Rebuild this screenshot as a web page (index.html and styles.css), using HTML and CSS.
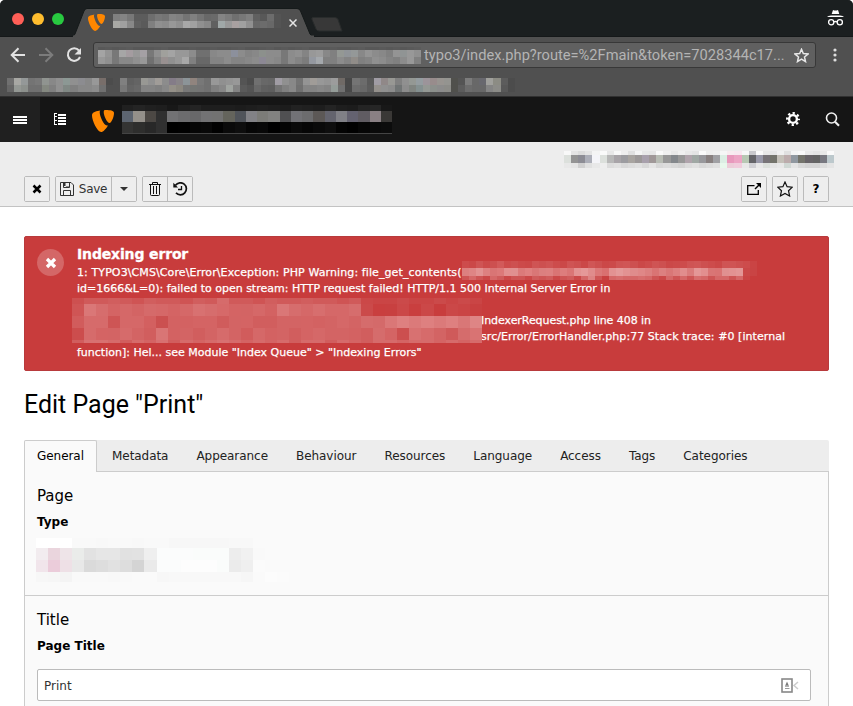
FILE: index.html
```html
<!DOCTYPE html>
<html lang="en">
<head>
<meta charset="utf-8">
<title>Edit Page "Print"</title>
<link rel="stylesheet" href="styles.css">
</head>
<body>
<svg class="defs" width="0" height="0"><defs>
<symbol id="typo3" viewBox="0 0 22 22"><path fill="#ff8700" d="M16 15.2c-.4.1-.7.2-1.1.2-3.2 0-7.2-9.8-7.2-13 0-1.200.3-1.600.7-1.900C4.700 1 .800 2.200.200 4.200 0 4.600 0 5 0 5.500 0 10.500 5.300 22 9.200 22c1.800 0 4.900-3 6.800-6.800M14.100.100c3.900 0 7.900.600 7.900 2.900 0 4.600-2.900 10.100-4.400 10.100-2.700 0-5.900-7.400-5.900-11 0-1.700.6-2 2.400-2"/></symbol>
</defs></svg>
<div class="window">
  <div class="tabstrip">
    <div class="lights"><i class="red"></i><i class="yellow"></i><i class="green"></i></div>
    <div class="browser-tab">
      <svg class="tab-shape" width="244" height="29" viewBox="0 0 244 29"><path d="M0 28.500Q2 28 3 26L12 3Q13 .5 15 .5H225Q227.500.5 228.500 3L238 26Q239 28.500 243 28.500" fill="#505050" stroke="#151a1a"/><path d="M1 28.500H242" stroke="#505050" stroke-width="2"/></svg>
      <svg class="tab-logo" width="17" height="17"><use href="#typo3"/></svg>
      <span class="mosaic" data-name="tab"></span>
      <svg class="tab-close" width="8" height="8" viewBox="0 0 8 8"><path d="M.5.5l7 7M7.500.5l-7 7" stroke="#e4e4e4" stroke-width="1.500"/></svg>
    </div>
    <svg class="newtab" width="32" height="15" viewBox="0 0 32 15"><path d="M2 .5H24Q26 .5 27 2.500L31 14H8Q6 14 5 12L.8 2Q.5.5 2 .5Z" fill="#383838" stroke="#292c2c"/></svg>
    <svg class="incognito" width="17" height="18" viewBox="0 0 17 18"><path d="M6 1Q8.500 2 11 1L12.300 5H4.700ZM0 8Q1 6.700 4 6.500H13Q16 6.700 17 8Z" fill="#fff"/><g fill="none" stroke="#fff" stroke-width="1.300"><circle cx="4.200" cy="13.300" r="2.600"/><circle cx="12.800" cy="13.300" r="2.600"/><path d="M6.800 13Q8.500 12 10.200 13"/></g></svg>
  </div>
  <div class="toolbar">
    <svg class="nav" width="16" height="16" viewBox="0 0 16 16" fill="none" stroke="#e2e2e2" stroke-width="2"><path d="M15 8H2M8.500 1.200L1.700 8l6.800 6.800"/></svg>
    <svg class="nav" width="16" height="16" viewBox="0 0 16 16" fill="none" stroke="#7c7c7c" stroke-width="2"><path d="M1 8H14M7.500 1.200L14.300 8l-6.800 6.800"/></svg>
    <svg class="nav" width="16" height="16" viewBox="0 0 16 16"><path d="M13 3.500A6.300 6.300 0 1 0 14 10" fill="none" stroke="#e2e2e2" stroke-width="2"/><path d="M15 1V7.500H8.500Z" fill="#e2e2e2"/></svg>
    <div class="address">
      <span class="mosaic" data-name="url"></span>
      <span class="url">typo3/index.php?route=%2Fmain&amp;token=7028344c17...</span>
      <svg class="bookmark-star" width="15" height="15" viewBox="0 0 15 15"><path d="M7.500 1.300L9.300 5.500 14 6 10.500 9 11.500 13.600 7.500 11.200 3.500 13.600 4.500 9 1 6 5.700 5.500Z" fill="none" stroke="#e8e8e8" stroke-width="1.500"/></svg>
    </div>
    <svg class="kebab" width="4" height="14" viewBox="0 0 4 14" fill="#dedede"><circle cx="2" cy="2" r="1.600"/><circle cx="2" cy="7" r="1.600"/><circle cx="2" cy="12" r="1.600"/></svg>
  </div>
  <div class="bookmarks"><span class="mosaic" data-name="bookmarks"></span></div>
</div>

<header class="topbar">
  <span class="menu-toggle"><svg width="14" height="8" viewBox="0 0 14 8"><path d="M0 1H14M0 4H14M0 7H14" stroke="#fff" stroke-width="2"/></svg></span>
  <svg class="tree" width="12" height="12" viewBox="0 0 12 12" fill="none" stroke="#fff"><path d="M.5 0V12M0 .5H3M0 3.500H3M0 7.500H3M0 11.500H3" stroke-width="1"/><path d="M4 2H12M4 5H12M4 8H12M4 11H12" stroke-width="2"/></svg>
  <svg class="logo" width="22" height="22"><use href="#typo3"/></svg>
  <span class="mosaic site" data-name="site"></span>
  <svg class="gear" width="14" height="14" viewBox="0 0 14 14" fill="none" stroke="#fff"><circle cx="7" cy="7" r="3.900" stroke-width="2.400"/><circle cx="7" cy="7" r="5.900" stroke-width="2.200" stroke-dasharray="2.317 2.317" stroke-dashoffset="1.160"/></svg>
  <svg class="search" width="15" height="15" viewBox="0 0 15 15" fill="none" stroke="#f0f0f0"><circle cx="6.500" cy="6" r="5" stroke-width="1.600"/><path d="M10 9.800L14 13.700" stroke-width="2.200"/></svg>
</header>

<div class="docheader">
  <div class="path"><span class="mosaic" data-name="path"></span></div>
  <div class="buttons">
    <span class="group"><button class="btn"><svg width="10" height="10" viewBox="0 0 10 10"><path d="M1.500 1.500l7 7M8.500 1.500l-7 7" stroke="#000" stroke-width="2.500"/></svg></button></span>
    <span class="group">
      <button class="btn save"><svg width="14" height="14" viewBox="0 0 14 14" fill="none" stroke="#333"><path d="M.5.5H11L13.500 3V13.500H.5ZM3.500.5V5.500H9.500V.5M3.500 13.500V8.500H10.500V13.500"/><path d="M4.500 1V4" stroke-width="2"/><path d="M6 5H9"/></svg>Save</button>
      <button class="btn caret"><svg width="8" height="4" viewBox="0 0 8 4"><path d="M0 0H8L4 4Z" fill="#333"/></svg></button>
    </span>
    <span class="group">
      <button class="btn trash"><svg width="12" height="14" viewBox="0 0 12 14" fill="none" stroke="#111"><path d="M0 2.500H12M3.500 2.500V.5H8.500V2.500M1.500 3V12.500Q1.500 13.500 2.500 13.500H9.500Q10.500 13.500 10.500 12.500V3M4.500 4V12M7.500 4V12"/></svg></button>
      <button class="btn history"><svg width="15" height="14" viewBox="0 0 15 14" fill="none" stroke="#111"><path d="M2.500 3.300A6 6 0 1 1 3 10.900" stroke-width="1.700"/><path d="M8.500 4V7.500H5" stroke-width="1.300"/><path d="M.3.800V5.500H5Z" fill="#111" stroke="none"/></svg></button>
    </span>
    <span class="spacer"></span>
    <span class="group"><button class="btn"><svg width="14" height="12" viewBox="0 0 14 12"><path d="M7.500 2.600H.7V11.300H11.300V7" fill="none" stroke="#000" stroke-width="1.300"/><path d="M8 6L12.500 1.500" stroke="#000" stroke-width="1.500"/><path d="M9 0H14V5Z"/></svg></button></span>
    <span class="group"><button class="btn"><svg width="16" height="16" viewBox="0 0 16 16"><path d="M8 1L10.100 5.700 15.300 6.200 11.500 9.700 12.600 15 8 12.500 3.400 15 4.500 9.700.700 6.200 5.900 5.700Z" fill="none" stroke="#111" stroke-width="1.200"/></svg></button></span>
    <span class="group"><button class="btn help">?</button></span>
  </div>
</div>

<main class="content">
  <div class="alert">
    <span class="alert-icon"><svg width="12" height="12" viewBox="0 0 12 12"><path d="M2 2l8 8M10 2l-8 8" stroke="#fff" stroke-width="3.300"/></svg></span>
    <div class="alert-body">
      <h4>Indexing error</h4>
      <p><span class="l1">1: TYPO3\CMS\Core\Error\Exception: PHP Warning: file_get_contents(</span><span class="mosaic arg" data-name="arg"></span></p>
      <p class="l2">id=1666&amp;L=0): failed to open stream: HTTP request failed! HTTP/1.1 500 Internal Server Error in</p>
      <p>&nbsp;</p>
      <p class="indent l4">IndexerRequest.php line 408 in</p>
      <p class="indent l5">src/Error/ErrorHandler.php:77 Stack trace: #0 [internal</p>
      <p class="l6">function]: Hel... see Module "Index Queue" &gt; "Indexing Errors"</p>
      <span class="mosaic trace" data-name="trace"></span>
    </div>
  </div>
  <h1><span>Edit Page "Print"</span></h1>
  <nav class="tabs">
    <a class="active">General</a><a>Metadata</a><a>Appearance</a><a>Behaviour</a><a>Resources</a><a>Language</a><a>Access</a><a>Tags</a><a>Categories</a>
  </nav>
  <div class="panel">
    <section class="type-section">
      <h2>Page</h2>
      <h3>Type</h3>
      <span class="mosaic type" data-name="type"></span>
    </section>
    <section>
      <h2>Title</h2>
      <h3>Page Title</h3>
      <div class="input"><span>Print</span>
        <svg width="18" height="15" viewBox="0 0 18 15" fill="none"><path d="M17 4L13 7.500L17 11" stroke="#ccc" stroke-width="1.500"/><rect x="1" y="1" width="10" height="13" fill="#fff" stroke="#888" stroke-width="1.600"/><path d="M4 8.200H8M4 10.500H8.500" stroke="#999" stroke-width="1.200"/><path d="M6 3.500L7.700 7.500H4.300Z" fill="#777"/></svg>
      </div>
    </section>
  </div>
</main>
<script src="mosaic.js"></script>
</body>
</html>
```
FILE: styles.css
```css
* { box-sizing: border-box; }
html, body { height: 706px; overflow: hidden; }
body { margin: 0; background: #fff; color: #000; font: 12px/16px "DejaVu Sans", Verdana, sans-serif; }
svg { display: block; flex: none; }
.defs { position: absolute; }
h1, h2, h3, h4, p { margin: 0; }
.mosaic { display: block; flex: none; }

.window { height: 96px; background: #505050; border-radius: 5px 5px 0 0; }
.tabstrip { display: flex; height: 37px; background: #1b1f20; border-bottom: 1px solid #151819; border-radius: 5px 5px 0 0; }
.lights { display: flex; gap: 8px; padding: 13px 0 0 12px; width: 72px; }
.lights i { width: 12px; height: 12px; border-radius: 50%; }
.red { background: #ff5f57; }
.yellow { background: #ffbd2e; }
.green { background: #28c940; }
.browser-tab { position: relative; display: flex; width: 244px; padding-left: 16px; margin-top: 8px; height: 29px; }
.tab-shape { position: absolute; left: 0; top: 0; }
.tab-logo { position: relative; margin-top: 6px; }
.browser-tab .mosaic { position: relative; margin: 6px 0 0 8px; width: 173px; }
.tab-close { position: relative; margin: 11px 0 0 3px; }
.newtab { margin: 17px 0 0 -5px; }
.incognito { margin: 9px 9px 0 auto; }
.toolbar { display: flex; align-items: center; height: 36px; padding-left: 10px; }
.nav { margin-right: 12px; }
.address { display: flex; align-items: center; width: 723px; height: 26px; margin-left: -1px; padding-left: 4px; background: #606060; border: 1px solid #383838; border-radius: 3px; }
.url { width: 365px; margin-left: 3px; white-space: nowrap; color: #b4b4b4; font: 14.650px/24px Roboto, sans-serif; }
.bookmark-star { margin-left: 5px; }
.kebab { margin-left: 17px; }
.bookmarks { height: 23px; padding: 5px 0 0 7px; }

.topbar { display: flex; align-items: center; height: 46px; background: #151515; border-top: 1px solid #303030; }
.menu-toggle { display: flex; align-items: center; justify-content: center; width: 40px; height: 45px; background: #202020; }
.tree { margin: -1px 0 0 14px; }
.logo { margin: 3px 8px 0 26px; }
.site { margin-top: -1px; border-bottom: 1px solid #444; }
.gear { margin: -1px 0 0 auto; }
.search { margin: 0 13px 0 25px; }

.docheader { height: 65px; padding: 9px 24px 0; background: #ededed; border-bottom: 1px solid #c3c3c3; }
.path { display: flex; justify-content: flex-end; margin-right: -5px; height: 25px; }
.buttons { display: flex; gap: 5px; }
.group { display: flex; height: 26px; border: 1px solid #bbb; border-radius: 2px; }
.btn { display: flex; align-items: center; justify-content: center; width: 24px; height: 24px; padding: 0; border: 0; background: #eee; color: #333; font: 12px/24px "DejaVu Sans", Verdana, sans-serif; }
.btn + .btn { border-left: 1px solid #bbb; width: 25px; }
.btn.save { width: 55px; gap: 5px; letter-spacing: -.3px; }
.btn.help { color: #000; font-weight: bold; }
.spacer { flex: 1; }

.content { padding: 29px 24px 0; }
.alert { display: flex; height: 135px; padding: 9px 12px; background: #c83c3c; border: 1px solid #b83a3c; border-radius: 2px; color: #fff; }
.alert-icon { display: flex; align-items: center; justify-content: center; width: 27px; height: 27px; margin: 3px 13px 0 0; border-radius: 50%; background: #d46767; }
.alert-body { position: relative; flex: 1; font-size: 11px; white-space: nowrap; }
.alert-body h4 { height: 19px; font-size: 14px; line-height: 17px; letter-spacing: -.15px; -webkit-text-stroke: .3px #fff; }
.alert-body p { display: flex; height: 16px; -webkit-text-stroke: .25px #fff; }
.l1 { width: 385px; letter-spacing: .1px; }
.alert-body .l5 { letter-spacing: .06px; }
.alert-body .l4 { letter-spacing: -.06px; }
.indent { padding-left: 404px; }
.arg { margin-top: -4px; }
.trace { position: absolute; left: -5px; top: 52px; }
h1 { height: 69px; padding-top: 15px; font: 26px/36px Roboto, sans-serif; }
h1 span { display: inline-block; transform: scaleX(.96); transform-origin: 0 50%; }
.tabs { display: flex; height: 31px; background: #ededed; color: #222; border-radius: 2px 2px 0 0; letter-spacing: -.05px; }
.tabs a { padding: 8px 14px 0; height: 31px; line-height: 17px; }
.tabs .active { height: 32px; width: 73px; padding: 7px 12px 0; margin-right: 1px; border: 1px solid #ccc; border-bottom: 0; background: #fafafa; border-radius: 2px 2px 0 0; color: #000; position: relative; }
.panel { height: 260px; border: 1px solid #ccc; background: #fafafa; }
.panel section { padding: 13px 17px 0 12px; }
.panel .type-section { height: 124px; border-bottom: 1px solid #ccc; }
h2 { font-size: 15px; font-weight: normal; line-height: 22px; }
h3 { margin-top: 6px; font-size: 12px; line-height: 18px; }
.type { margin: 7px 0 0 -1px; }
.input { display: flex; align-items: center; justify-content: space-between; height: 32px; margin-top: 14px; padding: 1px 11px 0 6px; border: 1px solid #bbb; border-radius: 2px; background: #fff; color: #333; }
```
FILE: mosaic.js
```js
// Pixelated placeholders. Each row: [height, colours]; two hex digits mean a grey.
const mosaics = {
  tab: { cell: 7, rows: [
    [7, "7f 84 78 5c 5c 6e 78 74 84 80 74 80 74 68 6a 84 7c 70 78 80 60 58 6c 54"],
    [7, "a9a9a5 a0 88 60 5a 80 90 8c 98 90 a8 a0 90 88 60 a0a8a8 98 a8a0a0 a0 90 68 6c 68 54"]] },
  url: { cell: 7.02, rows: [
    [3, "58 5a 58 5a 5c 58 58 58 5a 5c 58 58 58 5a 58 58 5a 58 58 5a 5c 58 58 5a 5c 58 5a 58 5a 5c 58 58 58 5a 58 58 5a 5c 58 58 5a 58 5a 58 5a 5c"],
    [7, "a4 94 78 a6 a49ca0 98 a4a0a4 78 90 a0a09c a4 98 98 8c 70 70 88 8c 8c 8c909c 8c 84 88 8c908c 8c 8c 78 8c 90 84 98 9c 88 80 949894 909498 949898 88 94 8c 88 80 949494 909494 989898 90"],
    [7, "98 90 78 88 88 90 98 70 84 989090 90 98 a8 80 68 68 84 84 8c 84 84 88 8c 8c8894 8c 88 78 8c 84 7c 9498a0 a4a8ac 80 80 8c 84 908c88 80 84 90 8c 84 80 8c 98 80"]] },
  bookmarks: { cell: 7.05, rows: [
    [7, "70 a8a8a4 949898 74 78 909490 88 90 8c9894 90 8c8c90 88 98 786e6a 4c 50 80 60 64 989894 90 a09c98 8c 847c88 888488 8c9498 90847e 78 70 98 90 94 98 54 4c 70 68 66 a09ca4 90 88 74 94 a09c98 98 949494 9c 706a66 48 74 6c 5a a09ca4 908888 989894 80 90 949894 949ca0 9c949a 988c8c 989490 949490 50504c 54 7c 68 68686e a0a09c 8c8c84 5c 4c"],
    [7, "66 949894 8c908c 70 70 848880 80 90 808884 80 88 88 8c 70 50 50 78 64 68 84 84 80 88 949088 8c8880 78 747674 74 70 80 88 a0a4a0 84 5a 54 68 60 5e 74 80 88 70 84 84 88 84 949c98 70 48 6c 68 5c 94908c 909090 8c8c8c 707474 8c8c8c 808480 849090 949894 8c908c 8c 8c8c88 50504c 5c 6c 68 68 848484 8c8c88 58 4c"]] },
  site: { cell: 11.25, rows: [
    [6, "20 24 20 1e 18 20 24 1e 1e 1e 1c 1e 20 1e 1c 22 20 1e 24 1e 1c 24 26 18"],
    [11, "5c6470 94908a 4c4844 303030 727274 6c6c6e 68686a 727274 727272 64645c 50545a 828286 7c7c78 828280 505052 727276 6c6c6e 5c5856 64646e 808086 646270 605c62 8a8084 3a3836"],
    [11, "343433 2e2e2d 282828 303030 00 01 06 08 01 0a 0e 06 08 00 04 0a 06 0a 0e 04 01 06 0a 0c"]] },
  path: { cell: 7.1, rows: [
    [4, "f8f8f8 e4 dc e4 f4 fa e8 f8 ee e0 f4 e8 e6 fa f0 e8 f0 e8 e4 fa ee f0 f6 f8ecf0 f8e8f0 f8 c8c8cc fa e8 e6 f0 e0 f4 f8 e8 e4 e8 fa"],
    [8, "dce0dc 94 8c8c94 acaeb8 f4f4f8 dce0dc b8b8b8 a8a4a8 9c9ca0 a8a4a0 9c9898 a8a0ac a09898 b8bcb4 989898 84888c 989898 b0a4ac a0a8a4 98989c 888080 a0a0a4 dceee4 e898bc eca4c4 b8c8b4 646468 9898a8 787478 74746c c4c0b8 bcacac 9098a0 74746c 686468 646464 787880 bcc8cc"],
    [5, "e8 e4 d0 e0 e8 ee dc e0 d8 dc e0 d8 e4 d8 dc d8 d4 dc e0 d8 dc e0 e8f8ec ecccd8 f0ccdc e8 d0d0d4 e8 dce0dc e4 e8 d0d8d4 e4 d8 d4 d4 dc e4"]] },
  arg: { cell: 7.02, rows: [
    [7, "cd4c4c cb4848 cf5454 cc4a4a cd5050 d25a5a cd4c4c cd5050 cc4a4a cb4848 cf5454 cd5050 cf5454 cd4c4c cb4848 cf5454 cd5050 cb4848 d05656 cd5050 cb4848 cc4a4a cf5454 d05656 cd5050 cb4848 cd4c4c cf5454 cd5050 cb4848 cc4a4a cd4c4c cf5454 d05656 cd5050 cd4c4c cb4848 cf5454 cf5454 cd5050 cd4c4c ca4444"],
    [8, "dc8080 de8585 e29292 dd8080 d97575 dc7979 e28f8f e09090 db7a7a df8080 d97777 db7f7f dd8080 d97474 dd7d7d da7575 e39292 e59898 e08c8c db7878 d97070 e29292 e49a9a e29292 df8c8c df8787 dc8080 d97474 dc8080 d97777 dd8080 e18d8d da7c7c e49797 e28f8f d97575 d97373 e09090 e29292 e39696 ca4848 c94444"],
    [4, "ce5555 d56868 ce5555 cb4848 d56868 cf5c5c cb4848 ce5555 ce5555 cb4848 d05c5c ce5555 d05c5c cb4848 ce5555 d05c5c cb4848 d56868 dd8484 ce5555 c84040 d56868 d76e6e d56868 d56868 d76e6e d56868 ce5555 cb4848 d56868 ce5555 d56868 ce5555 d76e6e d56868 ce5555 d56868 d56868 ce5555 d56868 ca4444"]] },
  trace: { cell: 12.05, rows: [
    [6, "cd5050 d05a5a d05a5a d15e5e d05a5a cf5454 d15e5e d05a5a d05a5a cf5454 d15e5e d05a5a d66b6b d05a5a d05a5a cf5454 d15e5e d05a5a d05a5a d15e5e d05a5a d05a5a cf5454 d05a5a cb4848 ca4545 ca4545 cb4a4a ca4545 ca4545 cb4a4a ca4545 cb4a4a ca4545"],
    [12, "cf5555 da7777 d66d6d d46464 d56868 d36464 d56a6a d56868 d46464 d56868 d87171 d66d6d d66969 d46464 d36464 d56868 d36262 da7777 d66d6d d56868 d76e6e d56868 d56868 d66d6d cb4a4a c93f3f c84040 cb4848 c93f3f cb4848 c83d3d cb4848 ca4545 c84040"],
    [12, "d15c5c d66b6b d66b6b ce5555 d56868 d56868 d36060 cb5050 d36262 d36262 d46464 d46464 d05c5c d36464 d46464 d15e5e d15e5e d36464 d36464 d46464 d36262 d36464 d56868 d36464 d56c6c d46a6a da7777 de8080 db7a7a de8080 db7a7a de8080 d97777 de8585"],
    [12, "cc4d4d d66b6b d46464 d36464 d66b6b d36464 d15e5e d97575 d36262 d36464 d15e5e d36464 d66b6b d36464 d15c5c d56868 d36262 d36464 d15e5e d46464 d56868 d36464 d36464 d36262 d15e5e d56c6c d46464 cc4f4f d87171 d66b6b d36464 cf5a5a d56c6c d97373"],
    [3, "d15e5e d87171 d87171 d66b6b d15e5e d66b6b d46464 d87171 d15e5e d66b6b d46464 d66b6b d87171 d66b6b d46464 d66b6b d46464 d66b6b d15e5e d66b6b d66b6b d15e5e d66b6b d46464 d15e5e d66b6b d66b6b d46464 d66b6b d66b6b d46464 d66b6b d46464 d66b6b"]] },
  type: { cell: 12.05, rows: [
    [10, "ff ff ff f9 f9 f8 f9 f9 f8 f9 f9 f7 f7 f7 f7 f7 f8 f8"],
    [12, "f2ecef ead5dd eee4e8 eaecea e2 e6 e6 e1 e2 ef fbfcfc fbfcfc fbfcfc fafcfb fafcfb fafcfb ed f1 f9 fa"],
    [12, "f1e5eb ebccda eee0e6 e8 da dd e1 dd d4 ea fbfcfc fbfcfc fd fd fd fafcfb eb ef fb fa"],
    [10, "f7 f6 f4 f9 f9 f9 f8 f9 fa fa f7 f8 f8 f8 f8 f8 f8 f6 fa fc fb"]] }
};
const ns = "http://www.w3.org/2000/svg";
document.querySelectorAll(".mosaic").forEach(host => {
  const m = mosaics[host.dataset.name];
  const svg = document.createElementNS(ns, "svg");
  let y = 0, width = 0;
  m.rows.forEach(([height, colours]) => {
    colours.split(" ").forEach((c, i) => {
      const left = Math.round(i * m.cell), right = Math.round((i + 1) * m.cell);
      width = Math.max(width, right);
      const rect = document.createElementNS(ns, "rect");
      rect.setAttribute("x", left);
      rect.setAttribute("y", y);
      rect.setAttribute("width", right - left);
      rect.setAttribute("height", height);
      rect.setAttribute("fill", "#" + (c.length === 2 ? c + c + c : c));
      svg.append(rect);
    });
    y += height;
  });
  svg.setAttribute("width", width);
  svg.setAttribute("height", y);
  host.append(svg);
});
```
